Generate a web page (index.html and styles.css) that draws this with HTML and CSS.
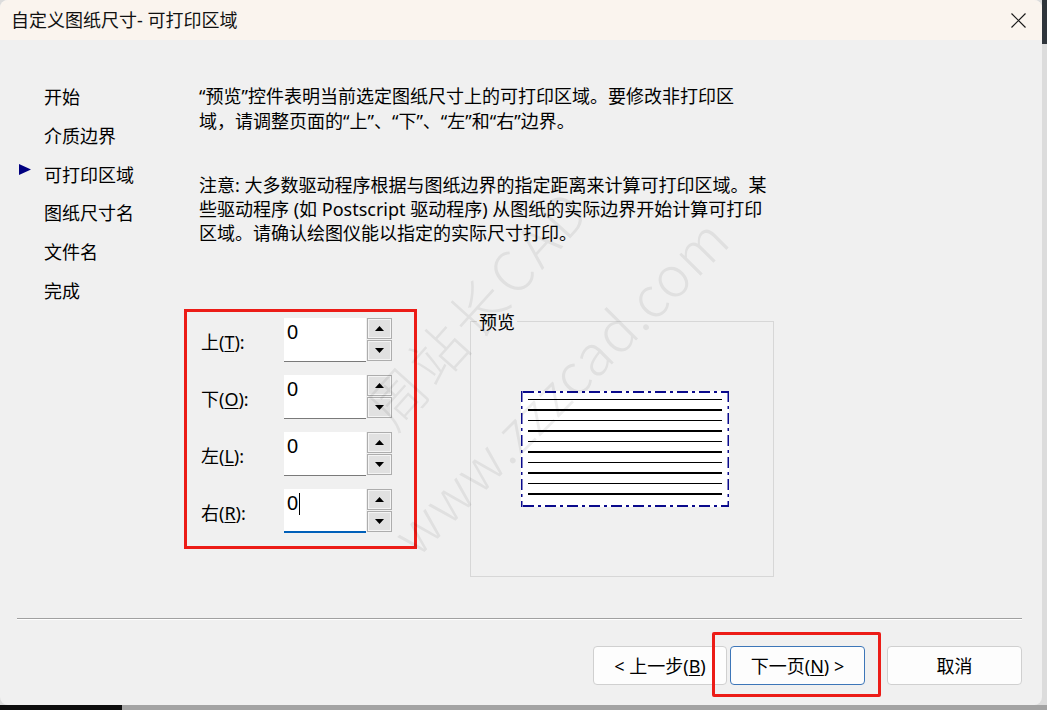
FILE: index.html
```html
<!DOCTYPE html>
<html lang="zh-CN">
<head>
<meta charset="utf-8">
<title>自定义图纸尺寸- 可打印区域</title>
<link rel="stylesheet" href="styles.css">
</head>
<body>
<div class="dialog">
  <div class="titlebar">
    <span class="title">自定义图纸尺寸- 可打印区域</span>
    <svg class="close" width="15" height="15" viewBox="0 0 15 15"><path d="M0.5 0.5L14.5 14.5M14.5 0.5L0.5 14.5" stroke="#1a1a1a" stroke-width="1.2" fill="none"/></svg>
  </div>
  <div class="content">
    <ul class="nav">
      <li>开始</li>
      <li>介质边界</li>
      <li class="current"><svg class="marker" width="12" height="11" viewBox="0 0 12 11"><polygon points="0,0 12,5.5 0,11" fill="#000080"/></svg>可打印区域</li>
      <li>图纸尺寸名</li>
      <li>文件名</li>
      <li>完成</li>
    </ul>
    <div class="main">
      <p class="p1">“预览”控件表明当前选定图纸尺寸上的可打印区域。要修改非打印区<br>域，请调整页面的“上”、“下”、“左”和“右”边界。</p>
      <p class="p2">注意: 大多数驱动程序根据与图纸边界的指定距离来计算可打印区域。某<br>些驱动程序 (如 Postscript 驱动程序) 从图纸的实际边界开始计算可打印<br>区域。请确认绘图仪能以指定的实际尺寸打印。</p>
      <div class="controls">
        <div class="margins">
          <div class="row">
            <label>上(<u>T</u>):</label>
            <div class="field">0</div>
            <div class="spin"><span><svg width="9" height="5" viewBox="0 0 9 5"><polygon points="0,5 9,5 4.5,0" fill="#000"/></svg></span><span><svg width="9" height="5" viewBox="0 0 9 5"><polygon points="0,0 9,0 4.5,5" fill="#000"/></svg></span></div>
          </div>
          <div class="row">
            <label>下(<u>O</u>):</label>
            <div class="field">0</div>
            <div class="spin"><span><svg width="9" height="5" viewBox="0 0 9 5"><polygon points="0,5 9,5 4.5,0" fill="#000"/></svg></span><span><svg width="9" height="5" viewBox="0 0 9 5"><polygon points="0,0 9,0 4.5,5" fill="#000"/></svg></span></div>
          </div>
          <div class="row">
            <label>左(<u>L</u>):</label>
            <div class="field">0</div>
            <div class="spin"><span><svg width="9" height="5" viewBox="0 0 9 5"><polygon points="0,5 9,5 4.5,0" fill="#000"/></svg></span><span><svg width="9" height="5" viewBox="0 0 9 5"><polygon points="0,0 9,0 4.5,5" fill="#000"/></svg></span></div>
          </div>
          <div class="row">
            <label>右(<u>R</u>):</label>
            <div class="field active">0<span class="caret"></span></div>
            <div class="spin"><span><svg width="9" height="5" viewBox="0 0 9 5"><polygon points="0,5 9,5 4.5,0" fill="#000"/></svg></span><span><svg width="9" height="5" viewBox="0 0 9 5"><polygon points="0,0 9,0 4.5,5" fill="#000"/></svg></span></div>
          </div>
        </div>
        <div class="preview">
          <span class="preview-label">预览</span>
          <svg class="paper" width="208" height="116" viewBox="0 0 208 116">
            <rect x="0" y="0" width="208" height="116" fill="#fff"/>
            <g stroke="#000">
              <line x1="7" y1="8.5" x2="201" y2="8.5" stroke-width="1"/>
              <line x1="7" y1="19" x2="201" y2="19" stroke-width="2"/>
              <line x1="7" y1="29.5" x2="201" y2="29.5" stroke-width="1"/>
              <line x1="7" y1="40" x2="201" y2="40" stroke-width="2"/>
              <line x1="7" y1="50.5" x2="201" y2="50.5" stroke-width="1"/>
              <line x1="7" y1="61" x2="201" y2="61" stroke-width="2"/>
              <line x1="7" y1="71.5" x2="201" y2="71.5" stroke-width="1"/>
              <line x1="7" y1="82" x2="201" y2="82" stroke-width="2"/>
              <line x1="7" y1="92.5" x2="201" y2="92.5" stroke-width="1"/>
              <line x1="7" y1="103" x2="201" y2="103" stroke-width="2"/>
            </g>
            <g stroke="#0a0a8c" fill="none">
              <line x1="2" y1="1" x2="208" y2="1" stroke-width="2" stroke-dasharray="11 4 3 4"/>
              <line x1="2" y1="115" x2="208" y2="115" stroke-width="2" stroke-dasharray="11 4 3 4"/>
              <line x1="0.75" y1="0" x2="0.75" y2="116" stroke-width="1.5" stroke-dasharray="11 4 3 4"/>
              <line x1="207.25" y1="0" x2="207.25" y2="116" stroke-width="1.5" stroke-dasharray="11 4 3 4"/>
            </g>
          </svg>
        </div>
      </div>
    </div>
  </div>
  <div class="separator"></div>
  <div class="footer">
    <button class="btn back">&lt; 上一步(<u>B</u>)</button>
    <div class="next-wrap">
      <button class="btn next">下一页(<u>N</u>) &gt;</button>
      <span class="callout"></span>
    </div>
    <button class="btn cancel">取消</button>
  </div>
  <div class="watermark">
    <span class="wm wm1">周站长CAD</span>
    <span class="wm wm2">www.zzzcad.com</span>
  </div>
</div>
</body>
</html>
```

FILE: styles.css
```css
* { box-sizing: border-box; }
html, body { margin: 0; padding: 0; }
body {
  width: 1047px;
  height: 710px;
  overflow: hidden;
  background:
    linear-gradient(to right, #0d0d0d 0 122px, #a3a3a3 122px) left bottom / 100% 5px no-repeat,
    linear-gradient(#2f353b 0 44px, #dcdcdc 44px) right top / 5px 100% no-repeat,
    #dcdcdc;
  font-family: "Noto Sans", "Noto Sans CJK SC", sans-serif;
  color: #000;
}
.dialog {
  position: relative;
  width: 1042px;
  height: 705px;
  background: #f0f0f0;
  border-radius: 8px;
  overflow: hidden;
  display: flex;
  flex-direction: column;
}
.titlebar {
  flex: none;
  height: 40px;
  background: #faf4ee;
  display: flex;
  align-items: center;
  justify-content: space-between;
  padding: 0 16px 0 11px;
}
.title { font-size: 18px; line-height: 24px; color: #111; }
.close { display: block; }
.content { flex: none; height: 578px; display: flex; }
.nav {
  flex: none;
  width: 199px;
  list-style: none;
  margin: 0;
  padding: 38px 0 0 0;
}
.nav li {
  position: relative;
  padding-left: 44px;
  font-size: 18px;
  line-height: 38.8px;
}
.marker { position: absolute; left: 19px; top: 8px; }
.main { flex: 1; padding-top: 44px; }
.main p { margin: 0; font-size: 18px; }
.p1 { line-height: 25px; }
.main .p2 { margin-top: 38.5px; line-height: 24px; }
.controls { display: flex; align-items: flex-start; margin-top: 64px; }
.margins {
  margin-left: -15px;
  width: 233px;
  height: 240px;
  border: 3px solid #ec1c17;
  padding: 6px 0 0 14px;
  display: flex;
  flex-direction: column;
  gap: 13px;
}
.row { display: flex; align-items: center; height: 44px; }
.row label { width: 83px; font-size: 18px; line-height: 24px; padding-top: 4px; }
.row u, .btn u { text-underline-offset: 2px; text-decoration-thickness: 1px; }
.field {
  width: 82px;
  height: 44px;
  background: #fff;
  border-bottom: 1px solid #7a7a7a;
  font-family: "Liberation Sans", sans-serif;
  font-size: 20px;
  line-height: 29px;
  padding-left: 3px;
}
.field.active { border-bottom: 2px solid #005fb8; }
.caret {
  display: inline-block;
  width: 1px;
  height: 22px;
  background: #000;
  vertical-align: -5px;
  margin-left: 1px;
}
.spin {
  margin-left: 1px;
  width: 25px;
  height: 43px;
  display: flex;
  flex-direction: column;
  gap: 1px;
}
.spin span {
  flex: 1;
  border: 1px solid #adadad;
  background: #e1e1e1;
  box-shadow: inset 0 0 0 1px #f4f4f4;
  display: flex;
  align-items: center;
  justify-content: center;
}
.spin svg { display: block; }
.preview {
  position: relative;
  margin-left: 53px;
  margin-top: 12px;
  width: 304px;
  height: 256px;
  border: 1px solid #d7d7d7;
  padding: 69px 0 0 50px;
}
.preview-label {
  position: absolute;
  left: 6px;
  top: -12px;
  padding: 0 2px;
  background: #f0f0f0;
  font-size: 18px;
  line-height: 24px;
}
.paper { display: block; }
.separator {
  flex: none;
  height: 2px;
  margin: 0 20px 0 17px;
  border-top: 1px solid #a0a0a0;
  border-bottom: 1px solid #ffffff;
}
.footer {
  flex: none;
  display: flex;
  justify-content: flex-end;
  padding: 26px 20px 0 0;
}
.btn {
  width: 135px;
  height: 39px;
  border: 1px solid #d0d0d0;
  border-radius: 4px;
  background: #fdfdfd;
  font-family: "Noto Sans", "Noto Sans CJK SC", sans-serif;
  font-size: 18px;
  line-height: 24px;
  color: #000;
  padding: 0;
  display: block;
}
.back { width: 134px; }
.next-wrap { position: relative; margin-left: 3px; }
.next { border-color: #3d76b8; }
.callout {
  position: absolute;
  left: -18px;
  top: -14px;
  width: 169px;
  height: 65px;
  border: 3px solid #ec1c17;
  border-radius: 2px;
}
.cancel { margin-left: 22px; }
.watermark { position: absolute; inset: 0; pointer-events: none; }
.wm {
  position: absolute;
  font-family: "Noto Sans CJK SC", sans-serif;
  font-weight: 300;
  font-size: 56px;
  line-height: 56px;
  color: rgba(0, 0, 0, 0.065);
  white-space: nowrap;
  transform-origin: left bottom;
}
.wm1 { left: 398px; top: 380px; transform: rotate(-48deg); letter-spacing: 4px; }
.wm2 { left: 420px; top: 506px; transform: rotate(-45deg); letter-spacing: 1px; }
```
